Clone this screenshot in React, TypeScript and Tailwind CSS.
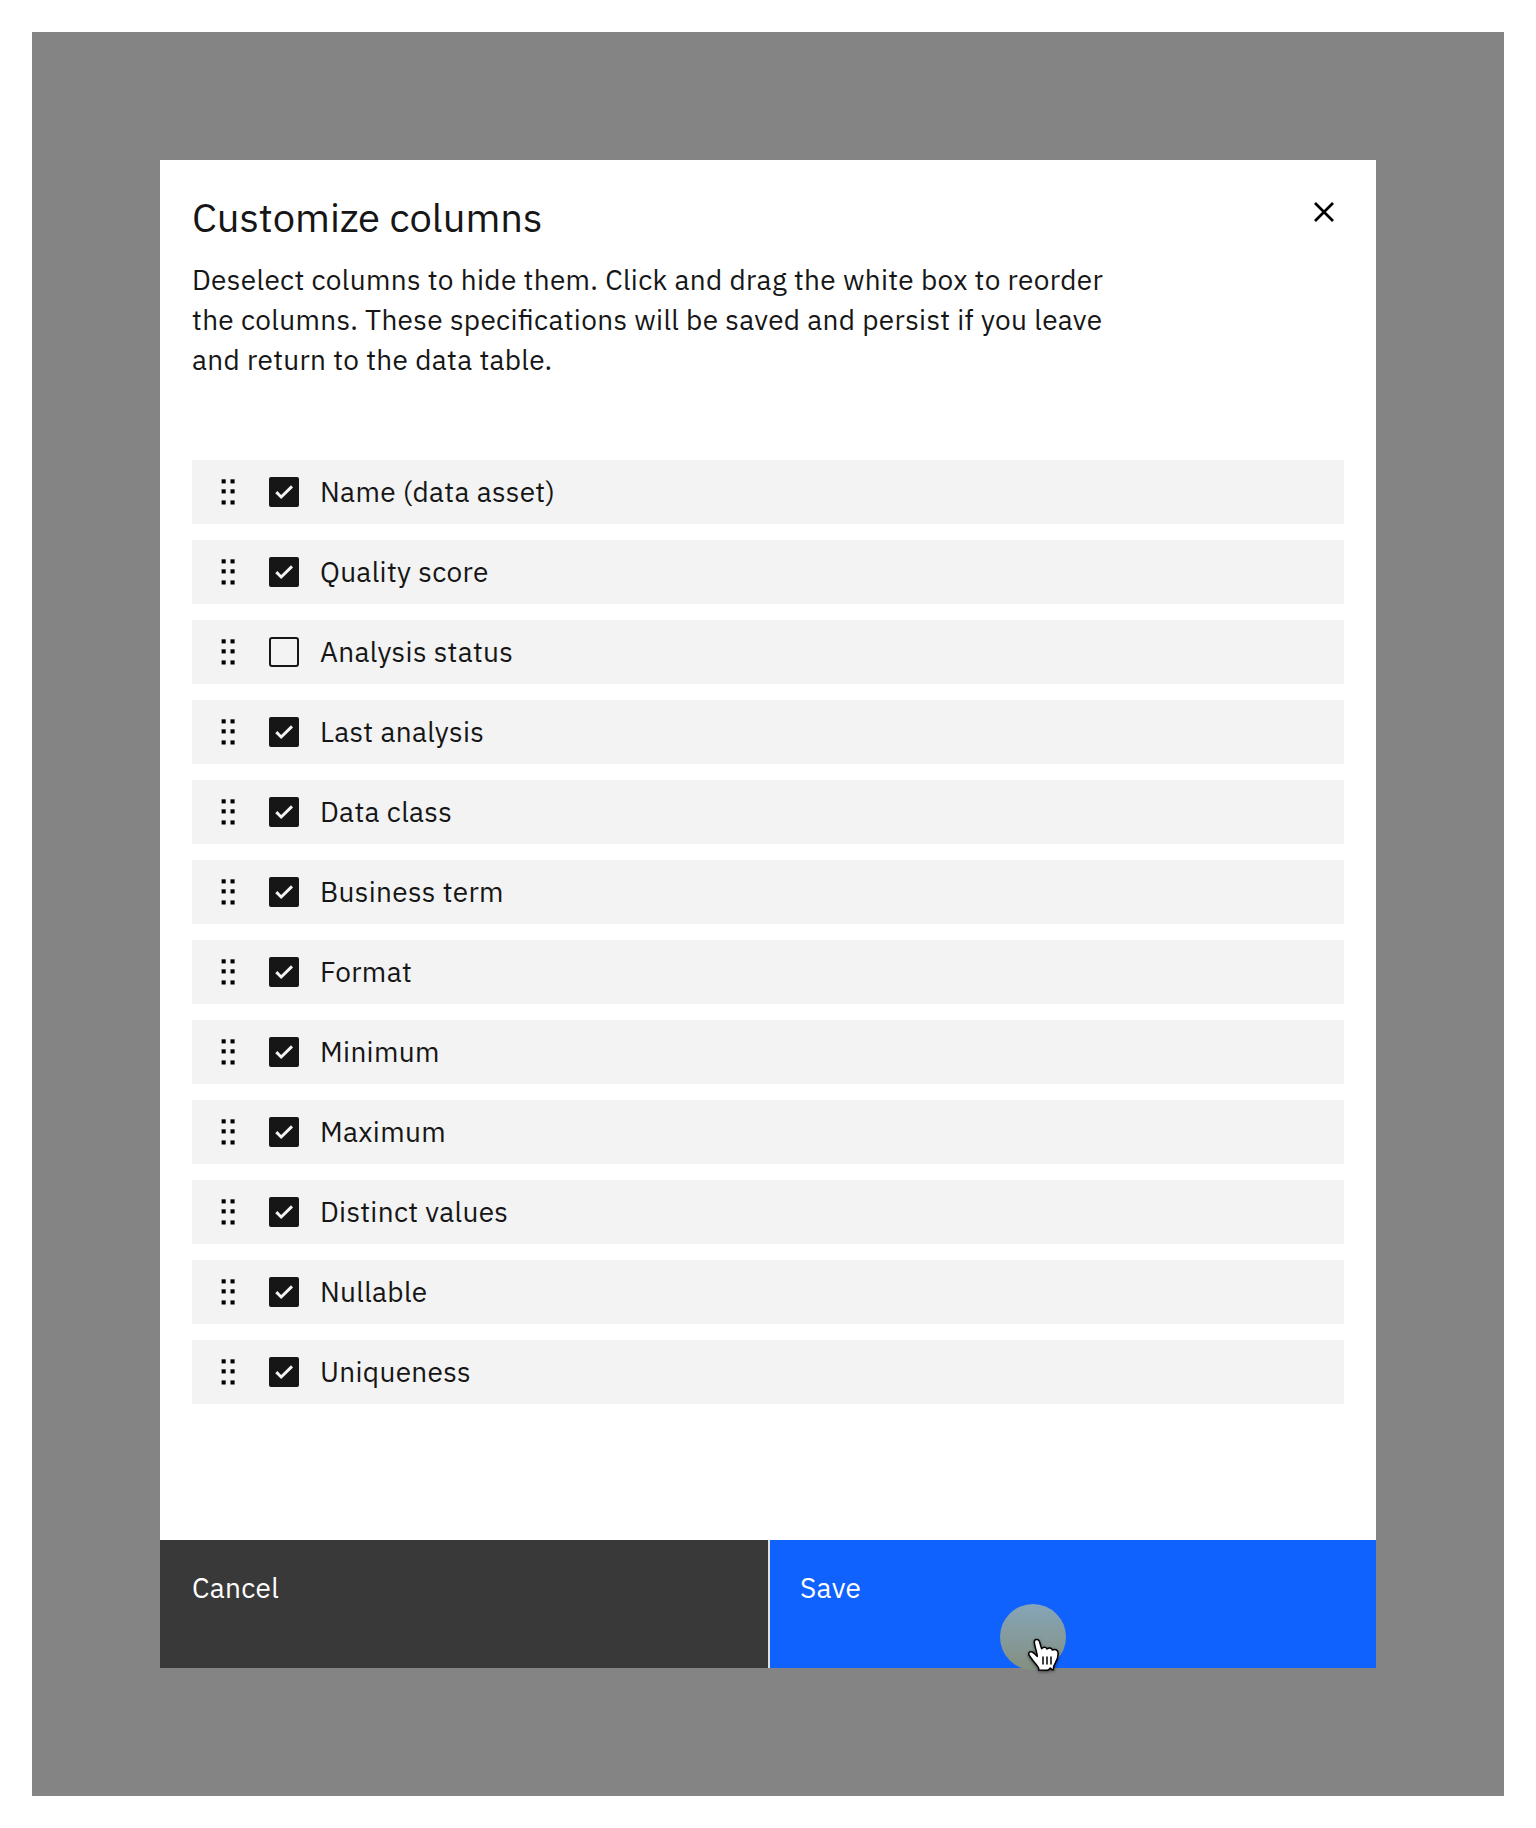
type Column = { label: string; shown: boolean };

const columns: Column[] = [
  { label: "Name (data asset)", shown: true },
  { label: "Quality score", shown: true },
  { label: "Analysis status", shown: false },
  { label: "Last analysis", shown: true },
  { label: "Data class", shown: true },
  { label: "Business term", shown: true },
  { label: "Format", shown: true },
  { label: "Minimum", shown: true },
  { label: "Maximum", shown: true },
  { label: "Distinct values", shown: true },
  { label: "Nullable", shown: true },
  { label: "Uniqueness", shown: true },
];

function DragHandle() {
  return (
    <svg className="ml-7 h-[30px] w-4 shrink-0" viewBox="0 0 16 30" fill="#000">
      {[2.3, 12.3, 23.4].map((y) => (
        <g key={y}>
          <rect x="1.6" y={y} width="4.1" height="4.1" />
          <rect x="10.5" y={y} width="4.1" height="4.1" />
        </g>
      ))}
    </svg>
  );
}

function Checkbox({ checked }: { checked: boolean }) {
  if (!checked) {
    return <span role="checkbox" aria-checked="false" className="ml-[33px] size-[30px] shrink-0 rounded-[3px] border-2 border-[#161616]" />;
  }
  return (
    <span role="checkbox" aria-checked="true" className="ml-[33px] size-[30px] shrink-0 rounded-[2px] bg-[#161616]">
      <svg className="size-full" viewBox="0 0 30 30" fill="none" stroke="#f3f3f3" strokeWidth="2.9">
        <path d="M7.3 15.1 12.2 20 23 9.4" />
      </svg>
    </span>
  );
}

function ColumnRow({ column }: { column: Column }) {
  return (
    <li className="flex h-16 items-center bg-[#f3f3f3]">
      <DragHandle />
      <Checkbox checked={column.shown} />
      <span className="ml-[21px] text-[28px] leading-10">{column.label}</span>
    </li>
  );
}

function Pointer() {
  return (
    <div className="pointer-events-none absolute top-[63.5px] left-[230px] size-[66px] rounded-full bg-linear-to-b from-[#86a5b8] to-[#849080]">
      <svg
        className="absolute top-[30px] left-[24px] h-[42px] w-[40px] drop-shadow-[0_1px_1.5px_rgba(0,0,0,0.5)]"
        viewBox="162 160 120 126"
        fill="#fff"
        stroke="#000"
        strokeWidth="4.5"
        strokeLinejoin="round"
        strokeLinecap="round"
      >
        <path d="M206 268V262C201 253 194 247 189 240C184 233 181 229 177 223C174 216 180 211 187 214C193 217 197 223 202 227C201 214 194 198 193 185C192 174 205 174 208 182C211 189 212 197 215 204C220 198 229 199 231 205C236 200 245 201 247 208C254 204 263 208 264 215C265 226 262 238 256 247C251 254 250 259 250 267C246 268 244 267 241 262C238 266 236 269 232 269Z" />
        <path d="M219 229V250M231 229V250M243 229V250" fill="none" />
      </svg>
    </div>
  );
}

export default function App() {
  return (
    <div className="h-[1828px] w-[1536px] bg-white p-8 font-['IBM_Plex_Sans',Roboto,sans-serif] text-[#161616]">
      <div className="h-[1764px] bg-[#848484] p-32">
        <div role="dialog" aria-label="Customize columns" className="flex h-[1508px] w-[1216px] flex-col bg-white">
          <header className="flex items-start justify-between px-8 pt-[33px]">
            <div>
              <h1 className="text-[40px] leading-[48px]">Customize columns</h1>
              <p className="mt-[19px] text-[28px] leading-10 tracking-[0.32px] [font-feature-settings:'liga'_1]">
                Deselect columns to hide them. Click and drag the white box to reorder
                <br />
                the columns. These specifications will be saved and persist if you leave
                <br />
                and return to the data table.
              </p>
            </div>
            <button aria-label="Close" className="mt-[9px] mr-[10px]">
              <svg className="size-5" viewBox="0 0 20 20" stroke="#000" strokeWidth="2.7">
                <path d="M1 1 19 19M19 1 1 19" />
              </svg>
            </button>
          </header>
          <ul className="mt-20 flex flex-col gap-4 px-8 tracking-[0.32px]">
            {columns.map((column) => (
              <ColumnRow key={column.label} column={column} />
            ))}
          </ul>
          <footer className="mt-auto flex h-32 gap-0.5 bg-[#e0e0e0] text-[28px] leading-10 tracking-[0.32px] text-white">
            <button className="flex w-[608px] items-start bg-[#393939] px-8 pt-7">Cancel</button>
            <button className="relative flex grow items-start bg-[#0f62fe] px-[30px] pt-7">
              Save
              <Pointer />
            </button>
          </footer>
        </div>
      </div>
    </div>
  );
}
